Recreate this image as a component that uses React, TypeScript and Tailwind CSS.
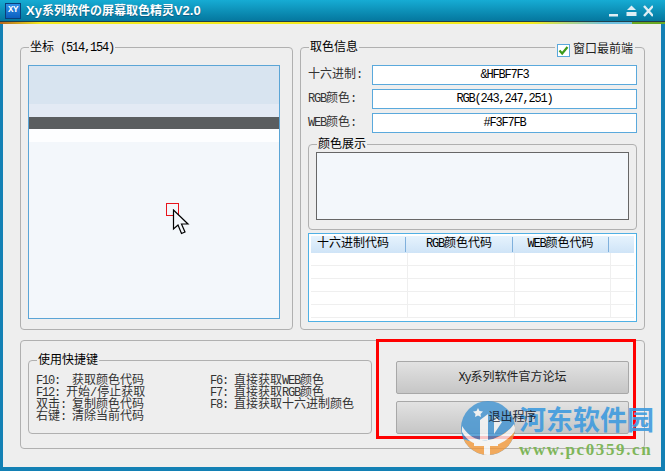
import type { ReactNode } from "react"

const uiFont = "font-['Liberation_Mono','Noto_Sans_CJK_SC',monospace]"

// Latin runs are squeezed so each glyph takes half of a 12px CJK cell
const L = ({ children }: { children: ReactNode }) => <span className="text-[12px] tracking-[-1.2px]">{children}</span>

const Group = ({ title, className, children }: { title: ReactNode, className: string, children?: ReactNode }) => (
    <fieldset className={`border border-[#b0b0b0] rounded-[4px] ${className}`}>
        <legend className="ml-[8px] px-[1px] h-[14px] text-[12px] leading-[17px] text-black whitespace-pre">{title}</legend>
        {children}
    </fieldset>
)

const Field = ({ label, value }: { label: ReactNode, value: string }) => (
    <div className="flex items-center">
        <div className="w-[64px] text-[12px] leading-[20px] text-[#333] whitespace-pre">{label}</div>
        <div className="w-[265px] h-[20px] border border-[#5aa9dc] bg-white flex items-center justify-center text-[12px] tracking-[-1.2px] text-black">{value}</div>
    </div>
)

const TitleBar = () => (
    <div className="shrink-0">
        <div className="h-[22px] bg-gradient-to-b from-[#16acd4] to-[#05779e] border-b border-[#1f3f4c] flex items-center pl-[5px] pr-[12px]">
            <div className="w-[16px] h-[16px] bg-gradient-to-b from-[#2f8fe8] to-[#0b5fc0] border border-[#0a3f78] flex items-center justify-center text-white text-[9px] tracking-[-0.5px] font-bold font-['Liberation_Mono',monospace]">XY</div>
            <div className="ml-[5px] text-white font-bold text-[13px] font-['Liberation_Sans','Noto_Sans_CJK_SC',sans-serif] [text-shadow:0_1px_1px_#0a5a80] whitespace-pre">
                Xy<span className="text-[12px]">系列软件の屏幕取色精灵</span>V2.0
            </div>
            <svg className="ml-auto" width="44" height="14" viewBox="0 0 44 14" fill="#dfeef4">
                <rect x="0" y="10" width="9" height="2.5" />
                <path d="M18 6 L22.5 1.5 L27 6 Z" />
                <rect x="17.5" y="8" width="10" height="4" />
                <path d="M35 2 L44 12 M44 2 L35 12" stroke="#dfeef4" strokeWidth="2.4" />
            </svg>
        </div>
        <div className="h-[2px] bg-[linear-gradient(to_right,#b5651d,#f4ea1e_6%,#f4ea1e_80%,#6ec0e0_91%,#6ec0e0_95%,#6aa823_95%)]" />
    </div>
)

const Watermark = () => (
    <div className="absolute left-[460px] top-[400px] flex items-start pointer-events-none">
        <svg className="opacity-80" width="56" height="56" viewBox="0 0 56 56">
            <defs>
                <clipPath id="disc"><circle cx="28" cy="28" r="27" /></clipPath>
            </defs>
            <g clipPath="url(#disc)">
                <rect width="56" height="56" fill="#3f93d2" />
                <path d="M0 38 Q28 50 56 24 L56 56 L0 56 Z" fill="#f2983a" />
                <path d="M2 26 Q12 42 28 40 Q44 38 54 24 L56 30 Q44 46 28 46 Q10 46 2 32 Z" fill="#f7f7f7" />
                <path d="M20 20 L28 14 L28 40 L20 40 Z M34 16 L42 22 L34 34 Z" fill="#f7f7f7" />
                <path d="M14 42 H38 V46 H30 V56 H24 V46 H14 Z" fill="#f7f7f7" />
            </g>
            <path d="M18 8 L19.5 11 L23 11.5 L20.5 14 L21 17 L18 15.5 L15 17 L15.5 14 L13 11.5 L16.5 11 Z" fill="#f7f7f7" />
        </svg>
        <div className="ml-[3px] flex flex-col">
            <div className="text-[27px] leading-[32px] mt-[3px] font-bold text-[#3f9bde] opacity-90 whitespace-pre font-['Noto_Sans_CJK_SC',sans-serif]">河东软件园</div>
            <div className="text-[17px] leading-[18px] mt-[6px] font-bold text-[#7fb65a] tracking-[1.6px] font-['Liberation_Serif',serif]">www.pc0359.cn</div>
        </div>
    </div>
)

export default function App() {
    return (
        <div className={`relative w-[665px] h-[471px] overflow-hidden bg-[#eeeeee] flex flex-col ${uiFont}`}>
            <TitleBar />
            <div className="flex-1 border-l-[3px] border-r-[4px] border-b-[4px] border-[#1380b4] pl-[17px] pt-[16px]">
                <div className="flex gap-[7px] items-start">
                    <Group className="w-[273px] h-[290px]" title={<>坐标<L> (514,154)</L></>}>
                        <div className="relative ml-[7px] mt-[11px] w-[252px] h-[254px] border border-[#5ba5d6] bg-[#f3f7fb] flex flex-col">
                            <div className="h-[38px] bg-[#d8e4f0]" />
                            <div className="h-[13px] bg-[#e3eaf4]" />
                            <div className="h-[12px] bg-[#5b5e60]" />
                            <div className="h-[13px] bg-[#fdfeff]" />
                            <div className="absolute left-[137px] top-[137px] w-[13px] h-[13px] border border-[#e8141c]" />
                            <svg className="absolute left-[143px] top-[143px]" width="18" height="26" viewBox="0 0 18 26">
                                <path d="M1.5 1 L1.5 20 L6 16 L9.5 24.5 L13 23 L9.5 15 L16 15 Z" fill="#f3f7fb" stroke="#000" strokeWidth="1.2" />
                            </svg>
                        </div>
                    </Group>

                    <Group className="relative w-[345px] h-[290px]" title="取色信息">
                        <div className="absolute right-[9px] top-[-11px] flex items-center gap-[3px] bg-[#eeeeee] px-[2px] text-[12px] leading-[14px] text-[#222]">
                            <div className="w-[13px] h-[13px] border border-[#5aa9dc] bg-white flex items-center justify-center">
                                <svg width="11" height="11" viewBox="0 0 11 11"><path d="M1.5 5.5 L4.2 8.5 L9.5 2" fill="none" stroke="#3d9a1a" strokeWidth="2.2" /></svg>
                            </div>
                            窗口最前端
                        </div>
                        <div className="ml-[7px] mt-[11px] flex flex-col gap-[4px]">
                            <Field label="十六进制:" value="&HFBF7F3" />
                            <Field label={<><L>RGB</L>颜色:</>} value="RGB(243,247,251)" />
                            <Field label={<><L>WEB</L>颜色:</>} value="#F3F7FB" />
                        </div>
                        <Group className="ml-[7px] mt-[4px] w-[329px] h-[93px]" title="颜色展示">
                            <div className="ml-[7px] mt-[1px] w-[313px] h-[68px] border border-[#666] bg-[#f3f7fb]" />
                        </Group>
                        <div className="ml-[7px] mt-[3px] w-[329px] h-[89px] border border-[#4fb0e4] bg-white px-[2px] pt-[2px]">
                            <div className="h-[17px] grid grid-cols-[95px_107px_96px_1fr] bg-gradient-to-b from-[#e6f3fd] to-[#cfe4f7] text-[12px] leading-[15px] text-black text-center">
                                <div className="border-r border-[#7fb0dc] my-[1px] text-left pl-[6px]">十六进制代码</div>
                                <div className="border-r border-[#7fb0dc] my-[1px]"><L>RGB</L>颜色代码</div>
                                <div className="border-r border-[#7fb0dc] my-[1px]"><L>WEB</L>颜色代码</div>
                                <div />
                            </div>
                            <div className="grid grid-cols-[97px_107px_96px_1fr]">
                                {Array.from({ length: 20 }).map((_, i) => (
                                    <div key={i} className={`h-[13px] border-b border-[#efefef] ${i % 4 === 3 ? "" : "border-r"}`} />
                                ))}
                            </div>
                        </div>
                    </Group>
                </div>

                <div className="relative mt-[10px] w-[625px] h-[109px] border border-[#b0b0b0] rounded-[4px] flex items-start pl-[7px] pt-[12px]">
                    <Group className="w-[344px] h-[81px] shrink-0" title="使用快捷键">
                        <div className="flex pl-[7px] pt-[8px] text-[12px] leading-[12px] whitespace-pre text-[#333]">
                            <div className="w-[174px]">
                                <div className="h-[12px]"><L>F10:  </L>获取颜色代码</div>
                                <div className="h-[12px]"><L>F12: </L>开始/停止获取</div>
                                <div className="h-[12px]">双击<L>: </L>复制颜色代码</div>
                                <div className="h-[12px]">右键<L>: </L>清除当前代码</div>
                            </div>
                            <div>
                                <div className="h-[12px]"><L>F6: </L>直接获取<L>WEB</L>颜色</div>
                                <div className="h-[12px]"><L>F7: </L>直接获取<L>RGB</L>颜色</div>
                                <div className="h-[12px]"><L>F8: </L>直接获取十六进制颜色</div>
                            </div>
                        </div>
                    </Group>
                    <div className="ml-[24px] mt-[8px] w-[233px] flex flex-col gap-[7px]">
                        <button className="h-[33px] border border-[#a8a8a8] rounded-[2px] bg-gradient-to-b from-[#e2e2e2] to-[#c6c6c6] text-[12px] text-[#222]"><L>Xy</L>系列软件官方论坛</button>
                        <button className="h-[33px] border border-[#a8a8a8] rounded-[2px] bg-gradient-to-b from-[#e2e2e2] to-[#c6c6c6] text-[12px]">
                            <span className="relative z-10 text-[#1c2a3a]">退出程序</span>
                        </button>
                    </div>
                </div>
            </div>

            {/* highlight frame around the two buttons */}
            <div className="absolute left-[376px] top-[339px] w-[260px] h-[100px] border-[3px] border-[#ff0000]" />
            <Watermark />
        </div>
    )
}
